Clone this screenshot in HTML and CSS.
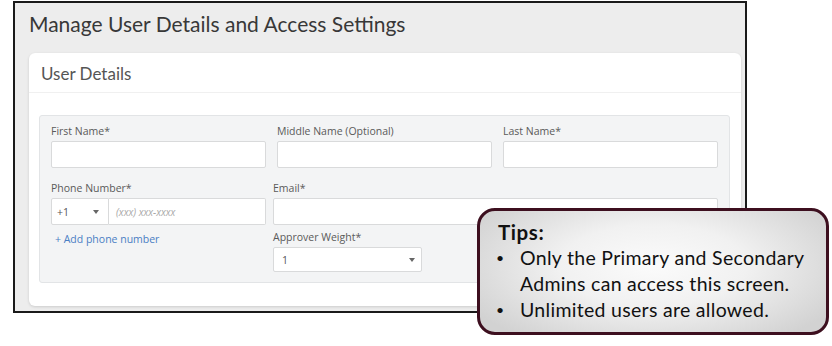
FILE: index.html
```html
<!DOCTYPE html>
<html lang="en">
<head>
<meta charset="utf-8">
<title>Manage User Details and Access Settings</title>
<link rel="stylesheet" href="styles.css">
</head>
<body>
<div class="frame">
  <h1 class="title">Manage User Details and Access Settings</h1>
  <section class="card">
    <div class="card-head">User Details</div>
    <div class="card-body">
      <div class="panel">
        <div class="row row-3">
          <div class="field">
            <label class="lbl">First Name*</label>
            <div class="input"></div>
          </div>
          <div class="field">
            <label class="lbl">Middle Name (Optional)</label>
            <div class="input"></div>
          </div>
          <div class="field">
            <label class="lbl">Last Name*</label>
            <div class="input"></div>
          </div>
        </div>
        <div class="row row-2">
          <div class="field">
            <label class="lbl">Phone Number*</label>
            <div class="phone">
              <div class="cc"><span>+1</span><span class="caret"></span></div>
              <div class="input ph">(xxx) xxx-xxxx</div>
            </div>
            <a class="add">+ Add phone number</a>
          </div>
          <div class="col">
            <div class="field">
              <label class="lbl">Email*</label>
              <div class="input"></div>
            </div>
            <div class="field approver">
              <label class="lbl">Approver Weight*</label>
              <div class="select"><span>1</span><span class="caret"></span></div>
            </div>
          </div>
        </div>
      </div>
    </div>
  </section>
</div>
<div class="tips">
  <div class="tips-title">Tips:</div>
  <ul class="tips-list">
    <li>Only the Primary and Secondary<br>Admins can access this screen.</li>
    <li>Unlimited users are allowed.</li>
  </ul>
</div>
</body>
</html>
```
FILE: styles.css
```css
* { box-sizing: border-box; }
html, body { margin: 0; padding: 0; background: #ffffff; }
body { width: 832px; height: 346px; overflow: hidden; position: relative; font-family: "Open Sans", sans-serif; }

.frame {
  margin: 1px 0 0 13px;
  width: 734px;
  height: 312px;
  border: 2px solid #1a1a1a;
  background: #ededed;
  padding: 8px 4px 5px 14px;
  display: flex;
  flex-direction: column;
}
.title {
  margin: 0 0 17px 0;
  font-family: Lato, sans-serif;
  font-weight: 400;
  font-size: 21px;
  line-height: 25px;
  color: #383838;
}
.card {
  flex: 1;
  background: #ffffff;
  border-radius: 6px;
  box-shadow: 0 1px 3px rgba(0,0,0,0.14);
  display: flex;
  flex-direction: column;
}
.card-head {
  padding: 11px 12px 8px;
  font-family: Lato, sans-serif;
  font-size: 17px;
  line-height: 20px;
  color: #555555;
  border-bottom: 1px solid #f0f0f0;
}
.card-body { padding: 22px 11px 22px 10px; }
.panel {
  background: #f3f4f5;
  border: 1px solid #e2e4e6;
  border-radius: 3px;
  padding: 8px 11px 10px 11px;
}
.row { display: grid; }
.row-3 { grid-template-columns: 1fr 1fr 1fr; column-gap: 11px; }
.row-2 { grid-template-columns: 215px 1fr; column-gap: 7px; margin-top: 13px; }
.field { display: flex; flex-direction: column; }
.lbl {
  font-family: "Open Sans", sans-serif;
  font-size: 10.5px;
  line-height: 14px;
  color: #5a5a5a;
  margin-bottom: 3px;
}
.input {
  height: 27px;
  background: #ffffff;
  border: 1px solid #d9dadb;
  border-radius: 2px;
}
.phone { display: flex; height: 27px; }
.cc {
  width: 58px;
  background: #ffffff;
  border: 1px solid #d9dadb;
  border-radius: 2px 0 0 2px;
  display: flex;
  align-items: center;
  justify-content: space-between;
  padding: 0 9px 0 5px;
  font-size: 10.5px;
  color: #555555;
}
.ph {
  flex: 1;
  height: 27px;
  border-left: 0;
  border-radius: 0 2px 2px 0;
  display: flex;
  align-items: center;
  padding-left: 7px;
  font-size: 10px;
  font-style: italic;
  color: #a8a8a8;
}
.caret {
  width: 0;
  height: 0;
  border-left: 3.5px solid transparent;
  border-right: 3.5px solid transparent;
  border-top: 4px solid #666666;
}
.add {
  margin-top: 7px;
  padding-left: 4px;
  font-size: 10.5px;
  line-height: 14px;
  color: #4a7ec4;
}
.approver { margin-top: 5px; align-items: flex-start; }
.select {
  width: 149px;
  height: 25px;
  background: #ffffff;
  border: 1px solid #d9dadb;
  border-radius: 2px;
  display: flex;
  align-items: center;
  justify-content: space-between;
  padding: 0 6px 0 8px;
  font-size: 10.5px;
  color: #555555;
}

.tips {
  position: absolute;
  left: 477px;
  top: 208px;
  width: 352px;
  height: 127px;
  border: 3px solid #3d0f1f;
  border-radius: 18px;
  background: radial-gradient(ellipse 60% 75% at 50% 45%, #fbfbfb 0%, #f1f1f1 45%, #d2d2d2 100%);
  padding: 8px 10px 0 18px;
  font-family: Lato, sans-serif;
  color: #111111;
  font-size: 19.5px;
  letter-spacing: 0.3px;
  line-height: 26px;
}
.tips-title { font-weight: 700; font-size: 20.5px; letter-spacing: 0.6px; }
.tips-list {
  margin: 0;
  padding: 0;
  list-style: none;
}
.tips-list li {
  position: relative;
  padding-left: 22px;
}
.tips-list li::before {
  content: "•";
  position: absolute;
  left: -2px;
  top: 0;
  font-size: 14px;
}
```
